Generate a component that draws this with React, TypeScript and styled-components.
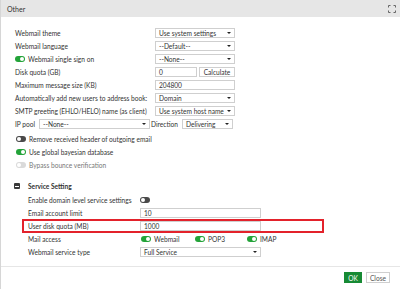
import React from "react";
import styled, { createGlobalStyle, css } from "styled-components";

const FS = "6.6px";

const Global = createGlobalStyle`
  html, body { margin: 0; padding: 0; background: #fff; }
  body { font-family: Lato, "Liberation Sans", sans-serif; color: #333; }
  * { box-sizing: border-box; }
`;

const Dialog = styled.div`
  width: 400px;
  height: 289px;
  display: flex;
  flex-direction: column;
  background: #fff;
  border-left: 1px solid #d6d6d6;
  overflow: hidden;
`;

const Header = styled.div`
  height: 17px;
  flex: none;
  background: #e6e6e6;
  display: flex;
  align-items: center;
  justify-content: space-between;
  padding: 0 4px 0 6px;
  font-size: 7px;
  color: #333;
`;

const Body = styled.div`
  flex: 1;
  padding-top: 11px;
  display: flex;
  flex-direction: column;
`;

const Grid = styled.div<{ $pad: number; $col: number; $field: number }>`
  display: grid;
  grid-template-columns: ${(p) => p.$col}px ${(p) => p.$field}px;
  grid-auto-rows: 10px;
  row-gap: 3px;
  padding-left: ${(p) => p.$pad}px;
  align-items: center;
`;

const Label = styled.div`
  font-size: ${FS};
  line-height: 10px;
  white-space: nowrap;
  color: #333;
  display: flex;
  align-items: center;
  gap: 3px;
`;

const fieldBase = css`
  height: 10px;
  border: 1px solid #cfcfcf;
  background: #fff;
  font-size: ${FS};
  line-height: 8px;
  color: #333;
  padding: 0 3px;
  display: flex;
  align-items: center;
  white-space: nowrap;
  overflow: hidden;
`;

const SelectBox = styled.div<{ $w?: number }>`
  ${fieldBase}
  justify-content: space-between;
  width: ${(p) => (p.$w ? `${p.$w}px` : "100%")};
`;

const Arrow = styled.span`
  width: 0;
  height: 0;
  border-left: 2px solid transparent;
  border-right: 2px solid transparent;
  border-top: 2.5px solid #222;
  flex: none;
  margin-left: 2px;
`;

const Input = styled.div<{ $w?: number }>`
  ${fieldBase}
  width: ${(p) => (p.$w ? `${p.$w}px` : "100%")};
`;

const Pair = styled.div`
  display: flex;
  gap: 2px;
`;

const SmallButton = styled.div`
  ${fieldBase}
  flex: 1;
  justify-content: center;
  padding: 0 1px;
`;

const Track = styled.span<{ $state: "on" | "off" | "disabled" }>`
  display: block;
  width: 10px;
  height: 6px;
  border-radius: 3px;
  flex: none;
  position: relative;
  background: ${(p) =>
    p.$state === "on" ? "#23a339" : p.$state === "off" ? "#4a4a4a" : "#dadada"};
  &::after {
    content: "";
    position: absolute;
    top: 1px;
    ${(p) => (p.$state === "on" ? "right: 1px;" : "left: 1px;")}
    width: 4px;
    height: 4px;
    border-radius: 50%;
    background: #fff;
  }
`;

const Toggle = ({ state }: { state: "on" | "off" | "disabled" }) => <Track $state={state} />;

const InlineRow = styled.div`
  display: flex;
  align-items: center;
  height: 10px;
  margin-top: 3px;
  padding-left: 14px;
  font-size: ${FS};
  gap: 4px;
  white-space: nowrap;
`;

const DirectionLabel = styled.span`
  margin-left: -3px;
`;

const ToggleList = styled.div`
  display: grid;
  grid-auto-rows: 10px;
  row-gap: 3px;
  padding-left: 15px;
  margin-top: 5px;
`;

const ToggleLine = styled.div<{ $muted?: boolean }>`
  display: flex;
  align-items: center;
  gap: 3px;
  font-size: ${FS};
  color: ${(p) => (p.$muted ? "#777" : "#333")};
  white-space: nowrap;
`;

const SectionHead = styled.div`
  display: flex;
  align-items: center;
  height: 10px;
  margin-top: 11px;
  padding-left: 13px;
  gap: 8px;
  font-size: ${FS};
  font-weight: 700;
  color: #333;
`;

const Minus = styled.span`
  width: 6px;
  height: 6px;
  background: #3a3a3a;
  border-radius: 1px;
  position: relative;
  &::after {
    content: "";
    position: absolute;
    left: 1px;
    right: 1px;
    top: 2.5px;
    height: 1px;
    background: #fff;
  }
`;

const ServiceGrid = styled(Grid)`
  margin-top: 4px;
`;

const RedBox = styled.div`
  position: absolute;
  left: 22px;
  width: 302px;
  top: 219px;
  height: 14px;
  border: 2px solid #e3222b;
  pointer-events: none;
`;

const Access = styled.div`
  display: grid;
  grid-template-columns: 54px 52px auto;
  align-items: center;
  padding-left: 1px;
`;

const Footer = styled.div`
  height: 23px;
  flex: none;
  border-top: 1px solid #e6e6e6;
  display: flex;
  justify-content: flex-end;
  align-items: center;
  gap: 4px;
  padding: 0 10px 1px 0;
`;

const Btn = styled.div<{ $primary?: boolean }>`
  height: 11px;
  padding: 0 3px;
  font-size: ${FS};
  display: flex;
  align-items: center;
  justify-content: center;
  min-width: 18px;
  border: 1px solid ${(p) => (p.$primary ? "#178a34" : "#cfcfcf")};
  background: ${(p) => (p.$primary ? "#178a34" : "#fff")};
  color: ${(p) => (p.$primary ? "#fff" : "#555")};
`;

const Page = styled.div`
  position: relative;
`;

const ExpandIcon = () => (
  <svg width="8" height="8" viewBox="0 0 8 8" fill="none" stroke="#666" strokeWidth="1">
    <path d="M0.5 2.5V0.5H2.5M5.5 0.5H7.5V2.5M7.5 5.5V7.5H5.5M2.5 7.5H0.5V5.5" />
  </svg>
);

export default function App() {
  return (
    <Page>
      <Global />
      <Dialog>
        <Header>
          <span>Other</span>
          <ExpandIcon />
        </Header>
        <Body>
          <Grid $pad={14} $col={140} $field={80}>
            <Label>Webmail theme</Label>
            <SelectBox>Use system settings<Arrow /></SelectBox>
            <Label>Webmail language</Label>
            <SelectBox>--Default--<Arrow /></SelectBox>
            <Label>
              <Toggle state="on" />
              Webmail single sign on
            </Label>
            <SelectBox>--None--<Arrow /></SelectBox>
            <Label>Disk quota (GB)</Label>
            <Pair>
              <Input $w={42}>0</Input>
              <SmallButton>Calculate</SmallButton>
            </Pair>
            <Label>Maximum message size (KB)</Label>
            <Input>204800</Input>
            <Label>Automatically add new users to address book:</Label>
            <SelectBox>Domain<Arrow /></SelectBox>
            <Label>SMTP greeting (EHLO/HELO) name (as client)</Label>
            <SelectBox>Use system host name<Arrow /></SelectBox>
          </Grid>
          <InlineRow>
            <span>IP pool</span>
            <SelectBox $w={111}>--None--<Arrow /></SelectBox>
            <DirectionLabel>Direction</DirectionLabel>
            <SelectBox $w={51}>Delivering<Arrow /></SelectBox>
          </InlineRow>
          <ToggleList>
            <ToggleLine>
              <Toggle state="off" />
              Remove received header of outgoing email
            </ToggleLine>
            <ToggleLine>
              <Toggle state="on" />
              Use global bayesian database
            </ToggleLine>
            <ToggleLine $muted>
              <Toggle state="disabled" />
              Bypass bounce verification
            </ToggleLine>
          </ToggleList>
          <SectionHead>
            <Minus />
            Service Setting
          </SectionHead>
          <ServiceGrid $pad={27} $col={112} $field={121}>
            <Label>Enable domain level service settings</Label>
            <div>
              <Toggle state="off" />
            </div>
            <Label>Email account limit</Label>
            <Input>10</Input>
            <Label>User disk quota (MB)</Label>
            <Input>1000</Input>
            <Label>Mail access</Label>
            <Access>
              <ToggleLine>
                <Toggle state="on" />
                Webmail
              </ToggleLine>
              <ToggleLine>
                <Toggle state="on" />
                POP3
              </ToggleLine>
              <ToggleLine>
                <Toggle state="on" />
                IMAP
              </ToggleLine>
            </Access>
            <Label>Webmail service type</Label>
            <SelectBox>Full Service<Arrow /></SelectBox>
          </ServiceGrid>
        </Body>
        <Footer>
          <Btn $primary>OK</Btn>
          <Btn>Close</Btn>
        </Footer>
      </Dialog>
      <RedBox />
    </Page>
  );
}
